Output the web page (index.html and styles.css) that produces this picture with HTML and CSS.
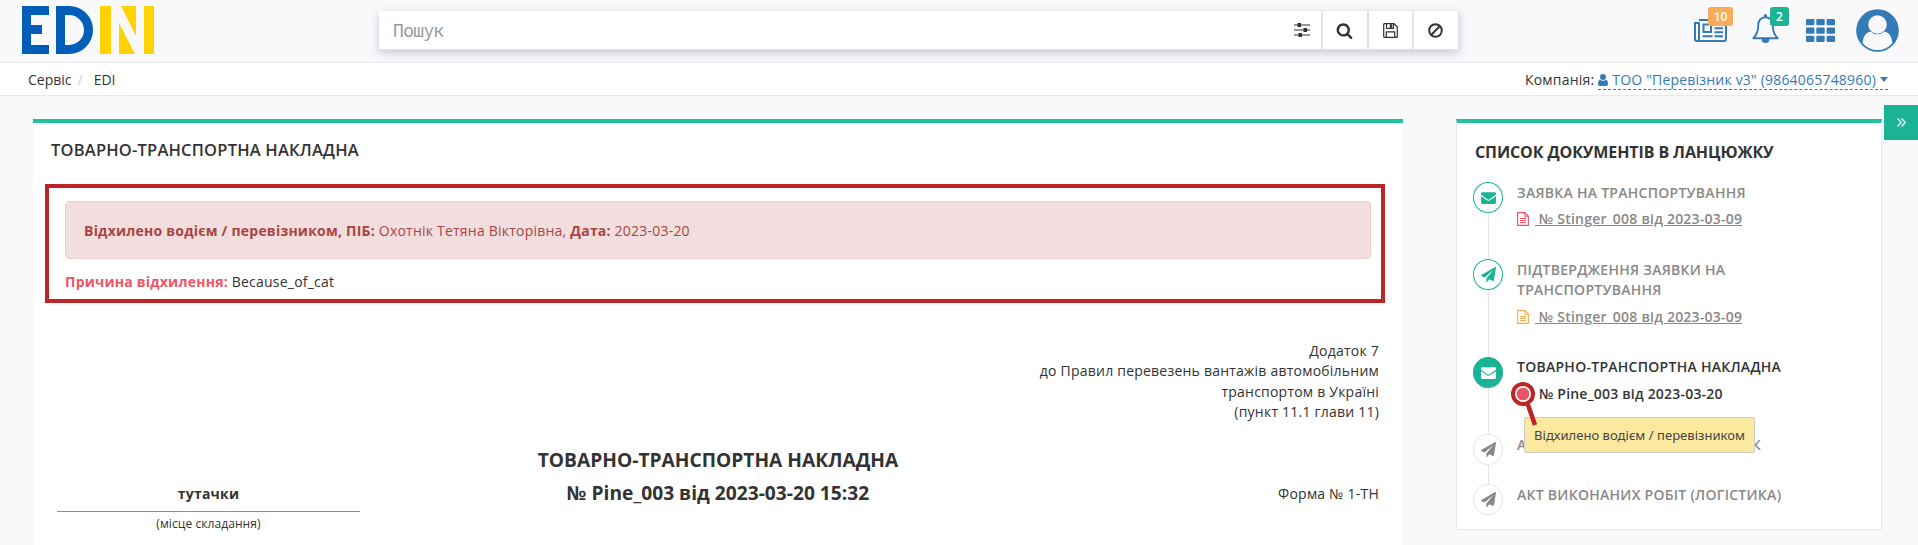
FILE: index.html
```html
<!DOCTYPE html>
<html lang="uk">
<head>
<meta charset="utf-8">
<title>EDIN</title>
<link rel="stylesheet" href="styles.css">
</head>
<body>
<svg class="sprite" aria-hidden="true">
  <symbol id="plane" viewBox="0 0 1792 1792"><path d="M1764 11q33 24 27 64l-256 1536q-5 29-32 45-14 8-31 8-11 0-24-5l-453-185-242 295q-18 23-49 23-13 0-22-4-19-7-30.5-23.500t-11.500-36.500v-349l864-1059-1069 925-395-162q-37-14-40-55-2-40 32-59l1664-960q15-9 32-9 20 0 36 11z"/></symbol>
  <symbol id="mail" viewBox="0 0 1792 1792"><path d="M1792 710v794q0 66-47 113t-113 47h-1472q-66 0-113-47t-47-113v-794q44 49 101 87 362 246 497 345 57 42 92.500 65.500t94.500 48 110 24.500h2q51 0 110-24.500t94.500-48 92.500-65.500q170-123 498-345 57-39 100-87zm0-294q0 79-49 151t-122 123q-376 261-468 325-10 7-42.500 31t-54 38.500-52 32.500-57.500 27-50 9h-2q-23 0-50-9t-57.500-27-52-32.500-54-38.500-42.500-31q-91-64-262-182.500t-205-142.500q-62-42-117-115.500t-55-136.500q0-78 41.500-130t118.500-52h1472q65 0 112.500 47t47.500 113z"/></symbol>
  <symbol id="file" viewBox="0 0 12 14"><path d="M.6.6H8L11.400 4V13.400H.6zM7.800.6V4.200H11.400M3 6.500H9M3 8.500H9M3 10.500H9" fill="none" stroke="currentColor" stroke-width="1.100"/></symbol>
</svg>

<header class="topbar">
  <div class="logo" role="img" aria-label="EDIN">
    <span class="logo-e"></span>
    <span class="logo-d"></span>
    <span class="logo-bar"></span>
    <svg class="logo-n" viewBox="0 0 17 48"><path d="M2 0H17V30zM0 17L16 48H0z"/></svg>
    <span class="logo-bar last"></span>
  </div>
  <div class="search">
    <div class="search-input">
      <span class="placeholder">Пошук</span>
      <svg width="16" height="14" viewBox="0 0 16 14" fill="#333"><path d="M0 1.500h16v1H0zM0 6.500h16v1H0zM0 11.500h16v1H0z"/><path d="M3.500 0h3.500v4H3.500zM9.500 5h3.500v4H9.500zM4.500 10h3.500v4H4.500z"/></svg>
    </div>
    <div class="search-btn b1"><svg width="17" height="17" viewBox="0 0 1792 1792" fill="#333"><path d="M1216 832q0-185-131.500-316.500t-316.500-131.500-316.500 131.500-131.500 316.500 131.500 316.500 316.500 131.500 316.500-131.500 131.500-316.500zm512 832q0 52-38 90t-90 38q-54 0-90-38l-343-342q-179 124-399 124-143 0-273.500-55.500t-225-150-150-225-55.500-273.500 55.500-273.500 150-225 225-150 273.500-55.500 273.500 55.500 225 150 150 225 55.500 273.500q0 220-124 399l343 343q37 37 37 90z"/></svg></div>
    <div class="search-btn b2"><svg width="15" height="15" viewBox="0 0 15 15" fill="none" stroke="#333" stroke-width="1.200"><path d="M1.300.7H11L14.300 4V13.700a.6.6 0 0 1-.6.6H1.300a.6.600 0 0 1-.6-.6V1.300a.6.600 0 0 1 .6-.6zM3.500.7V5.400H10.500V.7M3.300 14.200V8.800H11.700V14.200"/><path d="M7 1.500h2v3H7z" fill="#333" stroke-width=".5"/></svg></div>
    <div class="search-btn b3"><svg width="15" height="15" viewBox="0 0 15 15" fill="none" stroke="#333" stroke-width="2"><circle cx="7.500" cy="7.500" r="6.300"/><path d="M3.300 11.700L11.700 3.300"/></svg></div>
  </div>
  <nav class="actions">
    <span class="action news">
      <svg width="33" height="23" viewBox="0 0 33 23" fill="none" stroke="#337ab7" stroke-width="2"><path d="M5 1H32V20a2 2 0 0 1-2 2H3a2 2 0 0 1-2-2V4H5V19.500a2 2 0 0 1-2 2.500"/><path d="M9.500 5.500H17V13H9.500zM8.500 17.300H18.500M20.500 9.300H29M20.500 13.300H29M20.500 17.300H29M20.500 5.300H29"/></svg>
      <b class="badge orange">10</b>
    </span>
    <span class="action bell">
      <svg width="27" height="30" viewBox="0 0 27 30"><path d="M13.500 3.200C8.500 3.200 6.300 7 6.300 10.500C6.300 17 4.800 21 1.300 24.200H25.700C22.200 21 20.700 17 20.700 10.500C20.700 7 18.500 3.200 13.500 3.200z" fill="none" stroke="#337ab7" stroke-width="1.900" stroke-linejoin="round"/><path d="M12 1.500a1.500 1.500 0 0 1 3 0V4H12zM9.500 25h8a4 4 0 0 1-8 0z" fill="#337ab7"/></svg>
      <b class="badge green">2</b>
    </span>
    <svg class="apps" width="29" height="23" viewBox="0 0 29 23" fill="#337ab7"><rect width="8.400" height="6.300" rx="1.300"/><rect x="10.300" width="8.400" height="6.300" rx="1.300"/><rect x="20.600" width="8.400" height="6.300" rx="1.300"/><rect y="8.400" width="8.400" height="6.300" rx="1.300"/><rect x="10.300" y="8.400" width="8.400" height="6.300" rx="1.300"/><rect x="20.600" y="8.400" width="8.400" height="6.300" rx="1.300"/><rect y="16.700" width="8.400" height="6.300" rx="1.300"/><rect x="10.300" y="16.700" width="8.400" height="6.300" rx="1.300"/><rect x="20.600" y="16.700" width="8.400" height="6.300" rx="1.300"/></svg>
    <svg width="43" height="43" viewBox="0 0 43 43"><circle cx="21.500" cy="21.500" r="21.300" fill="#337ab7"/><path d="M6.500 34C7.500 27 10 23.300 14.500 22.500A10 10 0 0 0 28.500 22.500C33 23.300 35.500 27 36.500 34A19.500 19.500 0 0 1 6.500 34z" fill="#f9f9fb"/><circle cx="21.500" cy="15.500" r="9.300" fill="#f9f9fb"/></svg>
  </nav>
</header>

<div class="crumbs">
  <div><span>Сервіс</span><span class="slash">/</span><span>EDI</span></div>
  <div class="company"><span>Компанія:</span><a class="company-link"><svg width="10" height="12" viewBox="0 0 10 12" fill="#337ab7"><circle cx="5" cy="3" r="3"/><path d="M2 5.500a4 4 0 0 0 6 0C9.500 6 10 8 10 10q0 2-2 2H2q-2 0-2-2C0 8 .5 6 2 5.500z"/></svg><span class="company-name">ТОО "Перевізник v3" (9864065748960)</span><i class="caret"></i></a></div>
</div>

<div class="content">
  <main class="panel">
    <h1>ТОВАРНО-ТРАНСПОРТНА НАКЛАДНА</h1>
    <section class="rejection">
      <div class="alert"><b>Відхилено водієм / перевізником, ПІБ:</b> Охотнік Тетяна Вікторівна, <b>Дата:</b> 2023-03-20</div>
      <p class="reason"><b>Причина відхилення:</b> Because_of_cat</p>
    </section>
    <div class="annex">Додаток 7<br>до Правил перевезень вантажів автомобільним<br>транспортом в Україні<br>(пункт 11.1 глави 11)</div>
    <div class="doc-head">
      <div class="place"><b>тутачки</b><span>(місце складання)</span></div>
      <h2>ТОВАРНО-ТРАНСПОРТНА НАКЛАДНА<br>№ Pine_003 від 2023-03-20 15:32</h2>
      <div class="form-no">Форма № 1-ТН</div>
    </div>
  </main>

  <aside class="chain">
    <h3>СПИСОК ДОКУМЕНТІВ В ЛАНЦЮЖКУ</h3>
    <ol>
      <li class="done h77"><i class="dot"><svg><use href="#mail"/></svg></i><div><p>ЗАЯВКА НА ТРАНСПОРТУВАННЯ</p><a class="doc red"><svg><use href="#file"/></svg><u>&nbsp;№ Stinger_008 від 2023-03-09</u></a></div></li>
      <li class="done h98"><i class="dot"><svg><use href="#plane"/></svg></i><div><p>ПІДТВЕРДЖЕННЯ ЗАЯВКИ НА<br>ТРАНСПОРТУВАННЯ</p><a class="doc amber"><svg><use href="#file"/></svg><u>&nbsp;№ Stinger_008 від 2023-03-09</u></a></div></li>
      <li class="current h77"><i class="dot"><svg><use href="#mail"/></svg></i><div><p>ТОВАРНО-ТРАНСПОРТНА НАКЛАДНА</p><a class="doc pine">№ Pine_003 від 2023-03-20</a></div>
        <svg class="marker" width="30" height="45" viewBox="0 0 30 45"><path d="M16 20L24 43" stroke="#be2326" stroke-width="4.500"/><circle cx="12" cy="12" r="12" fill="#be2326"/><circle cx="12" cy="12" r="8" fill="#fff"/><circle cx="12" cy="12" r="6.300" fill="#ed5565"/></svg>
        <span class="tooltip">Відхилено водієм / перевізником</span>
      </li>
      <li class="h50"><i class="dot"><svg><use href="#plane"/></svg></i><div><p class="covered"><span>А</span><span>К</span></p></div></li>
      <li class="last-item"><i class="dot"><svg><use href="#plane"/></svg></i><div><p>АКТ ВИКОНАНИХ РОБІТ (ЛОГІСТИКА)</p></div></li>
    </ol>
  </aside>
</div>
<button class="toggle" aria-label="Згорнути"><svg width="9" height="9" viewBox="0 0 9 9" fill="none" stroke="#fff" stroke-width="1.200"><path d="M.5.5L4.300 4.500L.5 8.500M4.500.5L8.300 4.500L4.500 8.500"/></svg></button>
</body>
</html>
```
FILE: styles.css
```css
* { box-sizing: border-box; }
body {
  margin: 0;
  height: 545px;
  overflow: hidden;
  background: #f9f9fb;
  color: #333;
  font: 14px/20px "Open Sans", "Noto Sans", sans-serif;
}
h1, h2, h3, p, ol { margin: 0; padding: 0; }
svg { display: block; flex: none; }
.sprite { position: absolute; width: 0; height: 0; }

.topbar {
  display: flex;
  align-items: flex-start;
  height: 63px;
  border-bottom: 1px solid #e7eaec;
}
.logo { display: flex; width: 132px; height: 48px; margin: 6px 225px 0 22px; }
.logo-e {
  width: 27px;
  margin-right: 7px;
  border: solid #005eb8;
  border-width: 9px 0 9px 9px;
  background: linear-gradient(#005eb8, #005eb8) 0 10px / 11px 9px no-repeat;
}
.logo-d { width: 37px; margin-right: 7px; border: 9px solid #005eb8; border-radius: 0 24px 24px 0 / 0 24px 24px 0; }
.logo-bar { width: 11px; background: #ffd200; }
.logo-bar.last { width: 10px; }
.logo-n { width: 17px; height: 48px; margin: 0 8px; fill: #ffd200; }

.search {
  display: flex;
  width: 1080px;
  height: 39px;
  margin-top: 11px;
  background: #fff;
  border: solid #e0e1e6;
  border-width: 0 1px 1px 0;
  box-shadow: 0 3px 9px rgba(70, 75, 120, .28);
}
.search-input { display: flex; flex: 1; justify-content: space-between; align-items: center; padding: 0 11px 0 14px; }
.placeholder { color: #999; font: 18px "Noto Sans Mono", "DejaVu Sans Mono", monospace; letter-spacing: -.65px; }
.search-btn { display: flex; align-items: center; justify-content: center; padding-right: 1px; border-left: 2px solid #e4e4e4; }
.b1 { width: 46px; }
.b2 { width: 45px; }
.b3 { width: 46px; padding-right: 2px; }

.actions { display: flex; margin: 9px 19px 0 auto; }
.action { position: relative; }
.news { margin: 10px 25px 0 0; }
.bell { margin: 5px 27px 0 0; }
.apps { margin: 10px 21px 0 0; }
.badge {
  position: absolute;
  height: 19px;
  border-radius: 3px;
  color: #fff;
  font-size: 12px;
  font-weight: 600;
  line-height: 19px;
  text-align: center;
}
.orange { left: 14px; top: -12px; width: 25px; background: #f8ac59; }
.green { left: 18px; top: -7px; width: 19px; background: #1ab394; }

.crumbs {
  display: flex;
  justify-content: space-between;
  height: 33px;
  padding: 7px 30px 0 28px;
  background: #fff;
  border-bottom: 1px solid #e7eaec;
}
.slash { margin: 0 11px 0 6px; color: #ccc; }
.company { display: flex; gap: 4px; letter-spacing: .2px; }
.company-link { display: flex; align-items: center; height: 20px; color: #337ab7; border-bottom: 1px dashed #337ab7; }
.company-name { margin: 0 4px 0 4px; }
.caret { border: solid transparent; border-width: 5px 4.500px 0; border-top-color: #337ab7; }

.content { display: flex; align-items: flex-start; padding: 23px 36px 0 33px; }
.panel { width: 1370px; height: 430px; border-top: 4px solid #1fc1a1; background: #fff; letter-spacing: .22px; }
.panel h1 { padding: 17px 0 0 18px; font-size: 16.500px; font-weight: 600; line-height: 20px; letter-spacing: .2px; }
.rejection {
  width: 1340px;
  height: 119px;
  margin: 24px 0 0 12px;
  padding: 13px 10px 0 16px;
  border: 4px solid #be2326;
}
.alert { height: 58px; padding: 19px 18px; border: 1px solid #ebccd1; border-radius: 4px; background: #f2dede; color: #a94442; }
.reason { margin-top: 13px; }
.reason b { color: #ed5565; }
.annex { height: 82px; margin: 38px 24px 0 0; line-height: 20.300px; text-align: right; }
.doc-head { display: grid; grid-template-columns: 303px 1fr 303px; margin: 20px 24px 0; }
.place { padding-top: 41px; text-align: center; }
.place b { display: block; height: 28px; border-bottom: 1px solid #8c8c8c; }
.place span { display: block; padding-top: 2px; font-size: 12px; letter-spacing: .08px; }
h2 { font-size: 19.200px; font-weight: 700; line-height: 33px; text-align: center; letter-spacing: 0; }
.form-no { padding-top: 41px; text-align: right; }

.chain { width: 426px; height: 411px; margin-left: 53px; border: 1px solid #e7eaec; border-top: 4px solid #1fc1a1; background: #fff; }
.chain h3 { padding: 19px 0 0 18px; font-size: 16px; font-weight: 700; line-height: 20px; letter-spacing: -.1px; }
.chain ol { padding: 20px 0 0 16px; list-style: none; }
.chain li { position: relative; display: flex; gap: 14px; color: #888; font-weight: 600; background: linear-gradient(#e2e6ea, #e2e6ea) 15px 0 / 1px 100% no-repeat; }
.chain li.last-item { background: none; }
.h77 { height: 77px; }
.h98 { height: 98px; }
.h50 { height: 50px; }
.dot { display: flex; flex: none; align-items: center; justify-content: center; width: 30px; height: 31px; border: 1px solid #e7eaec; border-radius: 50%; background: #fff; }
.dot svg { width: 15px; height: 15px; fill: currentColor; }
.done .dot { border-color: #1ab394; color: #1ab394; }
.current .dot { border-color: #1ab394; background: #1ab394; color: #fff; }
.chain p { padding-top: 1px; letter-spacing: .27px; }
.chain .current p { padding-top: 0; }
.doc { display: flex; align-items: center; height: 20px; margin-top: 6px; letter-spacing: .2px; }
.h98 .doc, .current .doc { margin-top: 7px; }
.doc svg { width: 12px; height: 14px; margin-right: 6px; }
.doc u { color: #888; letter-spacing: .22px; }
.red { color: #ed5565; }
.amber { color: #f8ac59; }
.chain .current { color: #333; z-index: 1; }
.pine { padding-left: 22px; }
.marker { position: absolute; left: 38px; top: 25px; z-index: 2; }
.tooltip {
  position: absolute;
  left: 51px;
  top: 60px;
  width: 231px;
  height: 36px;
  border: 1px solid #ccc;
  border-radius: 2px;
  background: #fce9a0;
  color: #444;
  font: 13px/35px "Noto Sans", sans-serif;
  letter-spacing: .03px;
  text-align: center;
  white-space: nowrap;
}
.covered { display: flex; justify-content: space-between; width: 244px; }

.toggle { position: absolute; right: 0; top: 105px; display: flex; align-items: center; justify-content: center; width: 34px; height: 35px; padding: 0; border: 0; background: #1ab394; }
```
